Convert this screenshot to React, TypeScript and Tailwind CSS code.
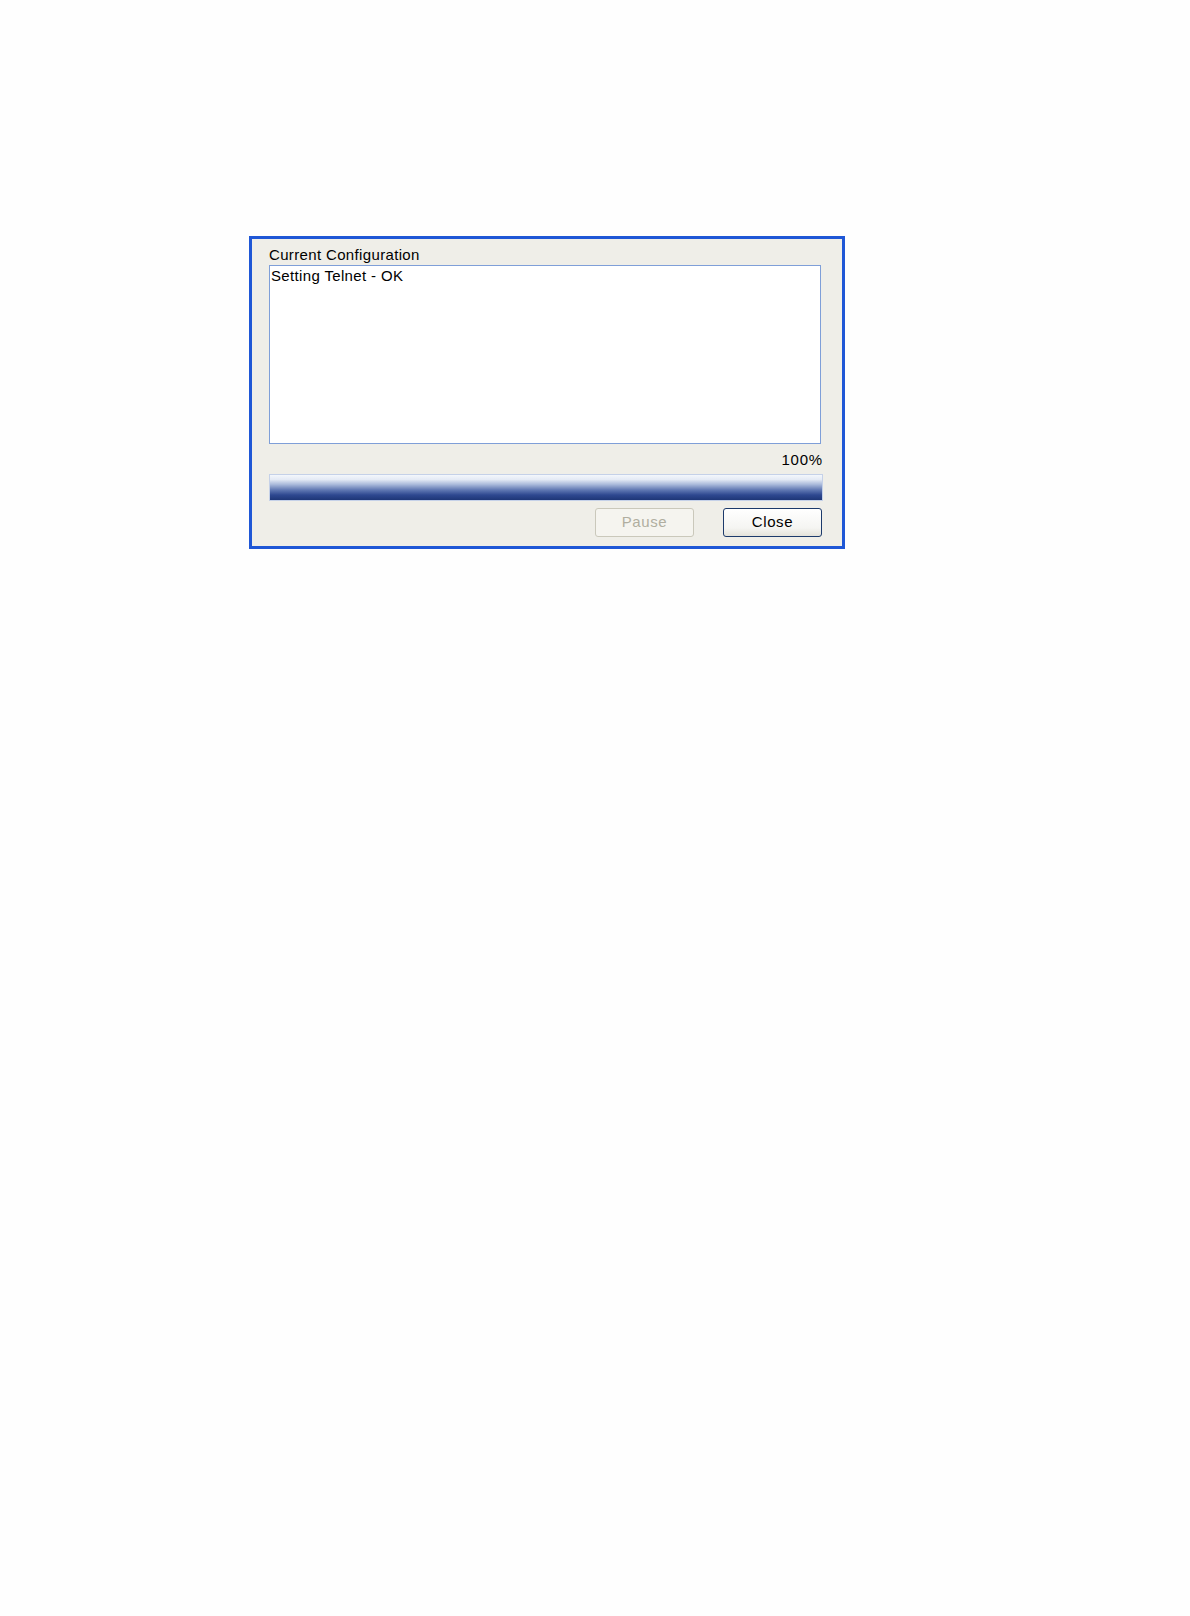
export default function App() {
  return (
    <div className="min-h-[1616px] w-[1190px] bg-[#fefefe] pt-[236px] pl-[249px] font-['Liberation_Sans',Arial,sans-serif] text-[15px] tracking-[0.35px] text-black">
      {/* Dialog window */}
      <div className="flex h-[313px] w-[596px] flex-col border-[3px] border-[#1f57d6] bg-[#efeee8] pl-[17px] pr-[19px] pt-[7px]">
        <div className="h-[18px] leading-[18px]">Current Configuration</div>

        {/* Log box */}
        <div className="mt-[1px] h-[179px] w-[552px] border border-[#7f9fd8] bg-white px-[1px] leading-[18px]">
          <div className="pt-[1px]">Setting Telnet - OK</div>
        </div>

        <div className="mt-[7px] flex h-[18px] w-[554px] justify-end leading-[18px] tracking-[0.8px]">100%</div>

        {/* Progress bar */}
        <div className="mt-[5px] h-[27px] w-[554px] border border-[#c5d1e8] bg-[linear-gradient(to_bottom,#f4f7fc_0%,#e4eaf5_18%,#a9b9da_38%,#5f77b2_60%,#2e4890_80%,#1e3677_100%)]" />

        {/* Buttons */}
        <div className="mt-[7px] flex w-[553px] justify-end gap-[29px]">
          <button className="h-[29px] w-[99px] rounded-[3px] border border-[#cac8bb] bg-[#f5f4ef] tracking-[0.6px] text-[#b0aea0]">
            Pause
          </button>
          <button className="h-[29px] w-[99px] rounded-[3px] border border-[#1c3a6b] bg-[linear-gradient(to_bottom,#ffffff_0%,#f5f5f2_70%,#e3e2da_100%)] tracking-[0.6px] text-black">
            Close
          </button>
        </div>
      </div>
    </div>
  )
}
